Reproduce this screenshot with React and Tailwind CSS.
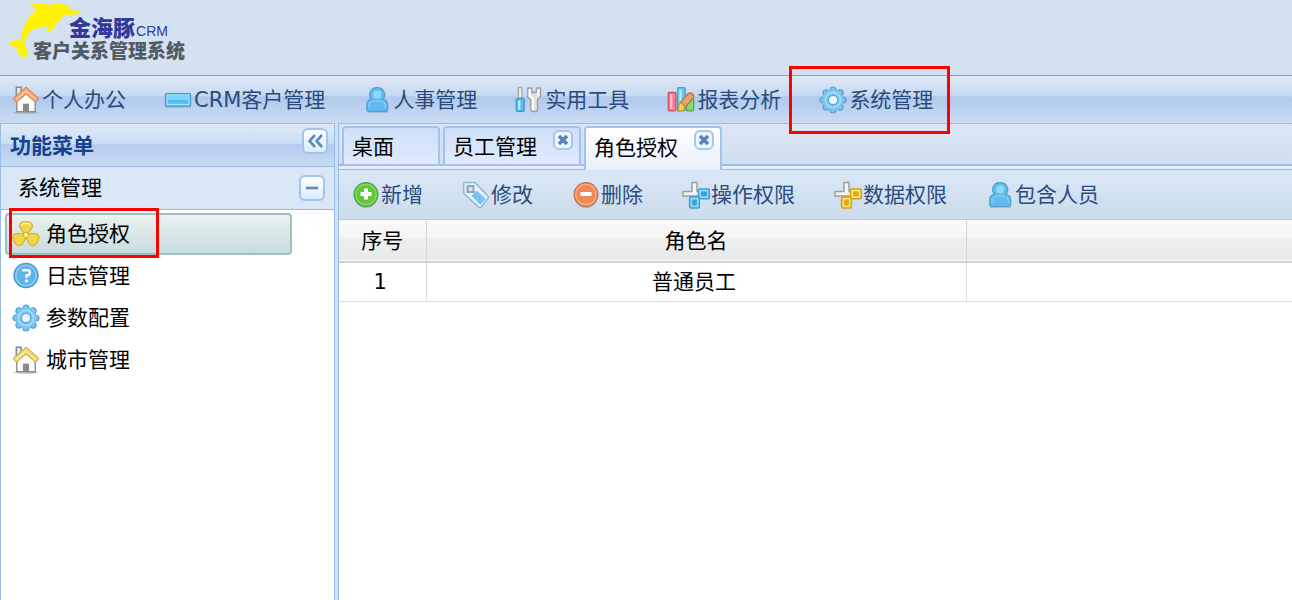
import React from 'react';

/* ---------- icons ---------- */

const House = ({ roof, edge, light }) => (
  <svg viewBox="0 0 27 28" className="size-7 shrink-0" aria-hidden="true">
    <ellipse cx="13.5" cy="26.500" rx="12.500" ry="1.300" fill="#8b98a8" opacity="0.5" />
    <path d="M3.800 11V1.200h4.800V8" fill="#e2e8ec" stroke="#848b92" strokeWidth="1.500" />
    <path d="M4.300 13v12.700h18.400V13l-9.200-8z" fill="#fdfdfd" stroke="#8d8d8d" strokeWidth="1.400" />
    <path d="M10.500 25.700v-8h6v8z" fill="#8a8a8a" />
    <path
      d="M13.500 1 26.300 12.400l-3.100 4-9.700-8.200-9.700 8.200-3.100-4z"
      fill={roof}
      stroke={edge}
      strokeWidth="1"
      strokeLinejoin="round"
    />
    <path d="M3.600 13.600 13.500 4.900l9.900 8.700" fill="none" stroke={light} strokeWidth="1.800" />
  </svg>
);

const Bar = () => (
  <svg viewBox="0 0 28 28" className="size-7 shrink-0" aria-hidden="true">
    <rect x="1" y="9" width="26" height="13" rx="1.500" fill="#8aa4bd" opacity="0.6" />
    <rect x="1.500" y="7.500" width="25" height="12.500" rx="1" fill="#4fbdf3" stroke="#3f95c9" strokeWidth="1.200" />
    <rect x="3" y="9" width="22" height="9.500" fill="none" stroke="#a5e2fb" strokeWidth="1.400" />
    <rect x="4" y="10" width="20" height="4" fill="#7cd3fb" />
  </svg>
);

const Person = () => (
  <svg viewBox="0 0 28 28" className="size-7 shrink-0" aria-hidden="true">
    <path d="M4 25.500h21v1.300H4z" fill="#7d93a8" opacity="0.5" />
    <path
      d="M3.800 23.500v-5q0-4 4.800-5.200A7 7 0 0 1 14.200 1.600a7 7 0 0 1 5.600 11.700q4.800 1.200 4.800 5.200v5q0 1.800-1.800 1.800H5.600q-1.800 0-1.800-1.800z"
      fill="#62baf0"
      stroke="#569fcd"
      strokeWidth="1.300"
    />
    <circle cx="14.200" cy="8.500" r="4.600" fill="#8cdcff" stroke="#6cc0ee" strokeWidth="1.500" />
    <path d="M6 22v-2q0-4.500 5-4.800h6.400q5 .3 5 4.800v2" fill="none" stroke="#7cc9f5" strokeWidth="1.800" />
  </svg>
);

const Tools = () => (
  <svg viewBox="0 0 28 28" className="size-7 shrink-0" aria-hidden="true">
    <path d="M3.400 12V2.300q0-.8.800-.8h1.800q.8 0 .8.800V12z" fill="#f2f2f2" stroke="#a5a5a5" strokeWidth="1.300" />
    <rect x="1.300" y="12.700" width="7.800" height="12.600" rx="1" fill="#58bff0" stroke="#4297c9" strokeWidth="1.300" />
    <path d="M4.300 14.500v9" stroke="#c8f1ff" strokeWidth="2" />
    <path
      d="M12.700 2h4.200v4.500h4.400V2h4.200v8.800l-3 3v9.700q0 2-2 2h-2.800q-2 0-2-2v-9.700l-3-3z"
      fill="#dedede"
      stroke="#a0a0a0"
      strokeWidth="1.300"
      strokeLinejoin="round"
    />
    <path d="M14.700 3.500v6.500l3.300 2.300v11.500M23.300 3.500v6.500" fill="none" stroke="#fff" strokeWidth="1.800" />
  </svg>
);

const Chart = () => (
  <svg viewBox="0 0 28 28" className="size-7 shrink-0" aria-hidden="true">
    <rect x="1.300" y="6.500" width="7.600" height="18.300" rx="1" fill="#f57f92" stroke="#cf5165" strokeWidth="1.300" />
    <path d="M4.300 8.500v14.300" stroke="#ffc5cc" strokeWidth="2" />
    <rect x="10.500" y="1.700" width="7.600" height="23" rx="1" fill="#68c9f5" stroke="#4a9fcf" strokeWidth="1.300" />
    <path d="M13.500 3.700v18" stroke="#c0efff" strokeWidth="2" />
    <rect x="19.500" y="13" width="7.200" height="11.800" rx="1" fill="#83da6c" stroke="#53a846" strokeWidth="1.300" />
    <path
      d="M20.700 8q2.800-2.300 5.100.1 2 2.500-.2 4.700L18.300 20.800l-4.800-4.600z"
      fill="#e9a06b"
      stroke="#ba6d3e"
      strokeWidth="1.200"
    />
    <path d="m13.500 16.200 4.800 4.600-2.200 3.700-4.800.8.300-5.200z" fill="#f8da4e" stroke="#b99424" strokeWidth="1.100" />
  </svg>
);

const Gear = () => (
  <svg viewBox="0 0 28 28" className="size-7 shrink-0" aria-hidden="true">
    {/* eight rounded teeth */}
    <g fill="#79c4f0" stroke="#58a2d2" strokeWidth="1.200">
      <circle cx="14" cy="4" r="3" />
      <circle cx="21.100" cy="6.900" r="3" />
      <circle cx="24" cy="14" r="3" />
      <circle cx="21.100" cy="21.100" r="3" />
      <circle cx="14" cy="24" r="3" />
      <circle cx="6.900" cy="21.100" r="3" />
      <circle cx="4" cy="14" r="3" />
      <circle cx="6.900" cy="6.900" r="3" />
    </g>
    <circle cx="14" cy="14" r="7.600" fill="none" stroke="#79c4f0" strokeWidth="6" />
    <circle cx="14" cy="14" r="7.600" fill="none" stroke="#a0dcf9" strokeWidth="1.800" />
    <circle cx="14" cy="14" r="4.700" fill="#e9f3fb" stroke="#5ca8d8" strokeWidth="1.200" />
  </svg>
);

const Fan = () => (
  <svg viewBox="0 0 28 28" className="size-7 shrink-0" aria-hidden="true">
    <g fill="#f0d545" stroke="#d0b038" strokeWidth="1.100" strokeLinejoin="round">
      <path d="M12 14 7.500 6.800Q7 1.500 14 1.500t6.500 5.300L16 14z" />
      <path d="M12 14 7.500 6.800Q7 1.500 14 1.500t6.500 5.300L16 14z" transform="rotate(120 14 15)" />
      <path d="M12 14 7.500 6.800Q7 1.500 14 1.500t6.500 5.300L16 14z" transform="rotate(240 14 15)" />
    </g>
    <path d="M9.800 5.800Q10 3.300 14 3.300t4.200 2.500" fill="none" stroke="#fbef9c" strokeWidth="1.600" />
    <circle cx="14" cy="15" r="2.600" fill="#fff08c" stroke="#d0b038" />
  </svg>
);

const Help = () => (
  <svg viewBox="0 0 28 28" className="size-7 shrink-0" aria-hidden="true">
    <circle cx="14" cy="13.500" r="12" fill="#5fb2ea" stroke="#4d98cd" strokeWidth="1.400" />
    <circle cx="14" cy="13.500" r="10.200" fill="none" stroke="#8accf3" strokeWidth="1.600" />
    <path d="M10.300 8.300h5.500q1.900 0 1.900 1.800v1.500q0 1.700-3.200 2v2.200" fill="none" stroke="#fff" strokeWidth="2.600" />
    <path d="M13 17.500h3v2.800h-3z" fill="#fff" />
  </svg>
);

const Round = ({ fill, edge, ring, plus }) => (
  <svg viewBox="0 0 28 28" className="size-7 shrink-0" aria-hidden="true">
    <ellipse cx="14" cy="16" rx="11.500" ry="11" fill="#70879c" opacity="0.5" />
    <circle cx="14" cy="13.500" r="11.800" fill={fill} stroke={edge} strokeWidth="1.300" />
    <circle cx="14" cy="13.500" r="10.200" fill="none" stroke={ring} strokeWidth="1.300" />
    <path d={plus ? 'M8.500 13h11M14 7.500v11' : 'M8.500 13h11'} stroke="#fff" strokeWidth="4" />
  </svg>
);

const Tag = () => (
  <svg viewBox="0 0 28 28" className="size-7 shrink-0" aria-hidden="true">
    <path
      d="M3 1.500h8.500q1.300 0 2.300 1l12 12.500q1.300 1.400 0 2.800l-6.800 8.200q-1.300 1.300-2.600 0L2.500 13q-.8-.8-.8-2V2.800Q1.700 1.500 3 1.500z"
      fill="#e2f3fb"
      stroke="#93bad3"
      strokeWidth="1.600"
    />
    <path d="m14.500 9.500 9.300 8.300-5.300 6L9.500 15z" fill="#79c2ee" />
    <rect x="5.500" y="5" width="6" height="6" fill="#d5e0eb" stroke="#869fb4" strokeWidth="1.800" />
  </svg>
);

const Nodes = ({ fill, edge, ring }) => (
  <svg viewBox="0 0 28 28" className="size-7 shrink-0" aria-hidden="true">
    <path d="M10 1.500h5v9h4v4.500H1v-4.500h9z" fill="#f3f3f3" stroke="#9c9c9c" strokeWidth="1.400" strokeLinejoin="round" />
    <g stroke={edge} strokeWidth="1.600" fill={ring}>
      <rect x="16.500" y="8" width="10.800" height="9.800" rx="1" />
      <rect x="7.700" y="16" width="9.600" height="11" rx="1" />
    </g>
    <g stroke={edge} fill={fill}>
      <rect x="19.500" y="11" width="4.800" height="3.800" />
      <rect x="10.700" y="19" width="3.600" height="5" />
    </g>
  </svg>
);

const Dolphin = () => (
  <svg viewBox="0 0 246 180" className="absolute left-0 top-0 h-[60px] w-[82px]" aria-hidden="true">
    <path
      d="M242 37Q238 32 214 30 205 14 184 12 165 9 148 15 115 8 88 12q14 6 20 21Q80 54 69 88q-5 18-5 33-24-1-33 3-6 5-2 11 3 5 19 6 5 17 14 27 10 8 19 1 4-9-1-24-6-11-7-18 9-28 28-39 20-8 47-10-12 8-7 17 9 3 17-7 8-11 12-20 14-11 22-24 25 1 42-1 9-2 8-6z"
      fill="#fff200"
    />
  </svg>
);

/* ---------- data ---------- */

const menus = [
  { label: '个人办公', icon: <House roof="#f5a070" edge="#cc8158" light="#ffc39c" /> },
  { label: 'CRM客户管理', icon: <Bar /> },
  { label: '人事管理', icon: <Person /> },
  { label: '实用工具', icon: <Tools /> },
  { label: '报表分析', icon: <Chart /> },
  { label: '系统管理', icon: <Gear />, marked: true },
];

const sideItems = [
  { label: '角色授权', icon: <Fan />, active: true },
  { label: '日志管理', icon: <Help /> },
  { label: '参数配置', icon: <Gear /> },
  { label: '城市管理', icon: <House roof="#ecd264" edge="#c3a950" light="#f9eb9c" /> },
];

const actions = [
  { label: '新增', icon: <Round fill="#62c63c" edge="#519f37" ring="#8ad86a" plus /> },
  { label: '修改', icon: <Tag /> },
  { label: '删除', icon: <Round fill="#ee8a58" edge="#c27149" ring="#fbab81" /> },
  { label: '操作权限', icon: <Nodes fill="#3d9fd9" edge="#3f9ed2" ring="#91dcfb" /> },
  { label: '数据权限', icon: <Nodes fill="#e5ae18" edge="#d5a01c" ring="#ffe96b" /> },
  { label: '包含人员', icon: <Person /> },
];

const tabs = [
  { label: '桌面', width: 'w-[98px]' },
  { label: '员工管理', width: 'w-[138px]', closable: true },
  { label: '角色授权', width: 'w-[138px]', closable: true, active: true },
];

const rows = [{ id: 1, name: '普通员工' }];

/* ---------- parts ---------- */

const Tab = ({ label, width, closable, active }) => (
  <div
    className={`${width} relative flex items-center rounded-t-sm border-2 pl-2 ${
      active
        ? 'h-11 border-[#a3c2ef] border-b-0 bg-linear-to-b from-white to-[#e8effd]'
        : 'h-10 border-[#a3c2ef] bg-linear-to-b from-[#cddff8] to-[#e1ebfc]'
    }`}
  >
    <button type="button" role="tab" aria-selected={!!active} className={active ? 'pb-0.5' : 'pt-0.5'}>
      {label}
    </button>
    {closable && (
      <button
        type="button"
        aria-label={`关闭${label}`}
        className="absolute right-1.5 top-0.5 flex size-5 items-center justify-center rounded-md border-2 border-[#a3c8ee] bg-[#edf5fd]"
      >
        <svg viewBox="0 0 12 12" className="size-3" aria-hidden="true">
          <path d="m2 2 8 8M10 2l-8 8" stroke="#5781b8" strokeWidth="3.400" />
        </svg>
      </button>
    )}
  </div>
);

const ToolButton = ({ label, path }) => (
  <button
    type="button"
    aria-label={label}
    className="flex size-[26px] items-center justify-center rounded-md border-2 border-[#9fc3ee] bg-linear-to-b from-white to-[#dcebfc]"
  >
    <svg viewBox="0 0 20 20" className="size-5" aria-hidden="true">
      <path d={path} fill="none" stroke="#5c8abb" strokeWidth="2.600" />
    </svg>
  </button>
);

const App = () => {
  return (
    <div className="flex min-h-screen flex-col overflow-hidden bg-[#d0e0f2] text-[21px] leading-7 text-black [font-family:'DejaVu_Sans','Noto_Sans_CJK_SC',sans-serif]">
      {/* Logo */}
      <header className="relative h-[75px] bg-[#d3e1f1]">
        <Dolphin />
        <div className="relative pt-[17px]">
          <div className="flex items-baseline gap-px pl-[69px] text-[22px] leading-6 text-[#33399a]">
            <span className="font-black">金海豚</span>
            <span className="text-sm [font-family:'Liberation_Sans',sans-serif]">CRM</span>
          </div>
          <div className="pl-[33px] text-[19px] font-black leading-5 text-[#505b64]">客户关系管理系统</div>
        </div>
      </header>

      {/* Main menu */}
      <nav className="flex h-12 items-center gap-[38px] border-t border-[#829fc9] bg-[linear-gradient(#dfe9f6,#c6d9f1_43%,#afc9ed_44%,#cbdcf2)] pl-3 pt-px text-[#2b4b7c]">
        {menus.map((m) => (
          <button key={m.label} type="button" className="relative flex shrink-0 items-center gap-0.5 whitespace-nowrap">
            {m.icon}
            {m.label}
            {m.marked && (
              <span className="pointer-events-none absolute -bottom-5 -left-[30px] -right-[17px] -top-5 z-10 border-3 border-[#fe0000]" />
            )}
          </button>
        ))}
      </nav>

      <div className="flex flex-1 gap-[3px]">
        {/* Side panel */}
        <aside className="w-[335px] shrink-0 border border-b-0 border-[#99bbe8] bg-white">
          <div className="flex h-[42px] items-center justify-between bg-[linear-gradient(#dfeaf7,#cadcf3_48%,#b3cbed_49%,#c9dbf3)] pl-[9px] pr-1.5">
            <h2 className="pt-0.5 font-bold text-[#15428b]">功能菜单</h2>
            <div className="pb-2">
              <ToolButton label="收起" path="m10 4-5.500 6 5.500 6M17 4l-5.500 6 5.500 6" />
            </div>
          </div>
          <div className="flex h-[44px] items-center justify-between border-y border-[#99bbe8] bg-[#dae7f6] pl-[17px] pr-[9px]">
            <h3>系统管理</h3>
            <ToolButton label="折叠" path="M4 10h12" />
          </div>
          <ul className="pl-1 pt-[3px]">
            {sideItems.map((s) => (
              <li key={s.label}>
                <button
                  type="button"
                  className={`relative flex h-[42px] w-[287px] items-center gap-1.5 rounded-sm border-2 pl-[5px] ${
                    s.active
                      ? 'border-[#9fbfc1] bg-linear-to-b from-[#ebf1f1] to-[#c8dcdd]'
                      : 'border-transparent'
                  }`}
                >
                  {s.icon}
                  {s.label}
                  {s.active && (
                    <span className="pointer-events-none absolute -bottom-[5px] -top-[7px] left-0.5 w-[150px] border-3 border-[#fe0000]" />
                  )}
                </button>
              </li>
            ))}
          </ul>
        </aside>

        {/* Workspace */}
        <main className="min-w-0 flex-1 border-l border-t border-[#99bbe8] bg-white">
          <div className="bg-[#e5eefa]">
            <div role="tablist" className="flex h-[42px] items-start gap-[3px] border-b-2 border-[#99bbe8] bg-linear-to-b from-[#dbe6f3] to-[#d0deee] pl-[3px] pt-0.5">
              {tabs.map((t) => (
                <Tab key={t.label} {...t} />
              ))}
            </div>
            <div className="h-[3px]" />
          </div>

          <div className="flex h-[51px] items-center gap-[39px] border-y border-[#99bbe8] border-b-[#bccadb] bg-linear-to-b from-[#dae7f7] to-[#cbdcec] pl-[13px] text-[#2b4b7c]">
            {actions.map((a) => (
              <button key={a.label} type="button" className="flex shrink-0 items-center gap-px whitespace-nowrap">
                {a.icon}
                {a.label}
              </button>
            ))}
          </div>

          <table className="w-full table-fixed border-collapse text-center">
            <thead>
              <tr className="h-[42px] border-b-2 border-[#d0d0d0] bg-[linear-gradient(#fafafa,#f4f4f4_44%,#eeeeef_45%,#e9eaec)]">
                <th className="w-[87px] border-r border-[#d5d5d5] font-normal">序号</th>
                <th className="w-[540px] border-r border-[#d5d5d5] font-normal">角色名</th>
                <td />
              </tr>
            </thead>
            <tbody>
              {rows.map((r) => (
                <tr key={r.id} className="h-[39px] border-b border-[#dcdcdc]">
                  <td className="border-r border-[#dcdcdc] pr-1">{r.id}</td>
                  <td className="border-r border-[#dcdcdc] pr-1">{r.name}</td>
                  <td />
                </tr>
              ))}
            </tbody>
          </table>
        </main>
      </div>
    </div>
  );
};

export default App;
